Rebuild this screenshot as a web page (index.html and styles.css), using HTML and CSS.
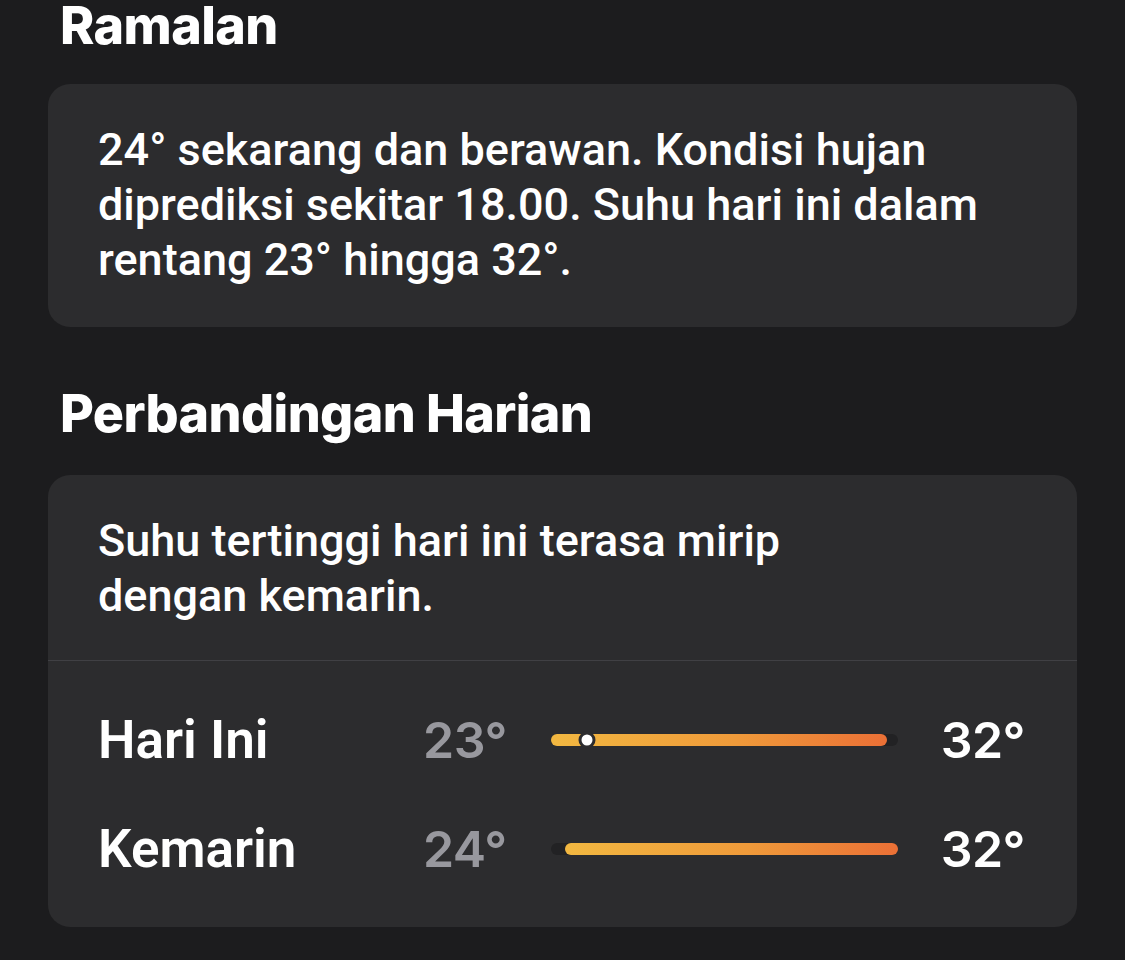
FILE: index.html
```html
<!DOCTYPE html>
<html lang="id">
<head>
<meta charset="utf-8">
<title>Ramalan</title>
<link rel="stylesheet" href="styles.css">
</head>
<body>
<main class="page">
  <h2 class="section-title">Ramalan</h2>
  <section class="card">
    <p class="card-text">24° sekarang dan berawan. Kondisi hujan diprediksi sekitar 18.00. Suhu hari ini dalam rentang 23° hingga 32°.</p>
  </section>

  <h2 class="section-title second">Perbandingan Harian</h2>
  <section class="card compare">
    <p class="card-text compare-summary">Suhu tertinggi hari ini terasa mirip<br>dengan kemarin.</p>
    <div class="divider"></div>
    <div class="rows">
      <div class="row">
        <span class="row-label">Hari Ini</span>
        <span class="row-low">23°</span>
        <div class="track">
          <div class="fill" style="margin-left:0%;width:96.8%"></div>
          <span class="dot" style="left:10.4%"></span>
        </div>
        <span class="row-high">32°</span>
      </div>
      <div class="row">
        <span class="row-label">Kemarin</span>
        <span class="row-low">24°</span>
        <div class="track">
          <div class="fill" style="margin-left:4%;width:96%"></div>
        </div>
        <span class="row-high">32°</span>
      </div>
    </div>
  </section>
</main>
</body>
</html>
```

FILE: styles.css
```css
html, body {
  margin: 0;
  padding: 0;
  background: #1c1c1e;
}

body {
  font-family: Roboto, "Liberation Sans", sans-serif;
  color: #ffffff;
  width: 1125px;
  height: 960px;
  overflow: hidden;
}

.page {
  padding: 0 48px 0 48px;
}

.section-title {
  margin: 0;
  padding-left: 12px;
  font-family: Inter, Roboto, sans-serif;
  font-size: 52px;
  line-height: 52px;
  font-weight: 800;
  letter-spacing: -0.6px;
}

.section-title.second {
  margin-top: 61px;
}

.card {
  background: #2c2c2e;
  border-radius: 22px;
  margin-top: 32px;
  padding: 38px 50px 40px 50px;
}

.section-title.second + .card {
  margin-top: 35px;
}

.card-text {
  margin: 0;
  font-size: 45px;
  line-height: 55px;
  font-weight: 500;
}

.compare {
  padding: 0;
}

.compare-summary {
  padding: 38px 50px 37px 50px;
}

.divider {
  height: 1px;
  background: #404044;
}

.rows {
  display: flex;
  flex-direction: column;
  gap: 49px;
  padding: 49px 52px 48px 50px;
}

.row {
  display: grid;
  grid-template-columns: 325px 128px 347px 1fr;
  align-items: center;
  height: 60px;
}

.row-label {
  font-size: 53px;
  line-height: 60px;
  font-weight: 600;
}

.row-low,
.row-high {
  font-family: Inter, Roboto, sans-serif;
  font-size: 50px;
  line-height: 60px;
  font-weight: 600;
  letter-spacing: -0.5px;
}

.row-low {
  color: #98989e;
}

.row-high {
  text-align: right;
}

.track {
  position: relative;
  height: 12px;
  border-radius: 6px;
  background: #222224;
  display: flex;
}

.fill {
  height: 12px;
  border-radius: 6px;
  background: linear-gradient(90deg, #f2b841 0%, #ef9a3a 55%, #eb7036 100%);
}

.dot {
  position: absolute;
  top: 50%;
  width: 11px;
  height: 11px;
  border: 3px solid #2c2c2e;
  border-radius: 50%;
  background: #ffffff;
  transform: translate(-50%, -50%);
}
```
